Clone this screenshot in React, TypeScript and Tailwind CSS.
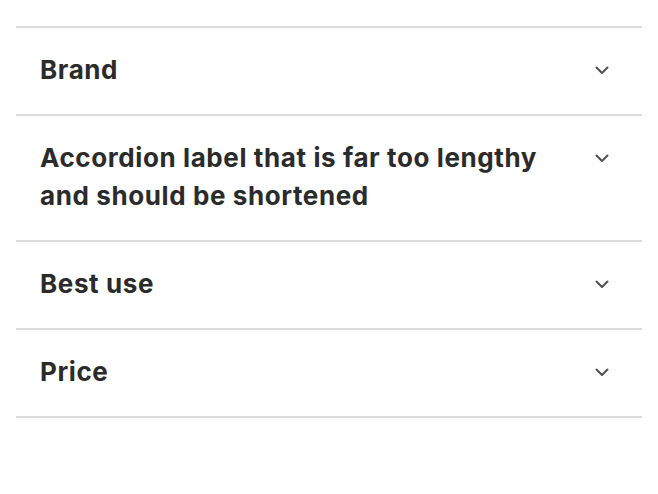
import { useState } from "react";

interface AccordionItem {
    id: string;
    label: string;
}

const items: AccordionItem[] = [
    { id: "brand", label: "Brand" },
    { id: "long", label: "Accordion label that is far too lengthy and should be shortened" },
    { id: "best-use", label: "Best use" },
    { id: "price", label: "Price" },
];

const Chevron = () => (
    <svg width="16" height="16" viewBox="0 0 16 16" fill="none" className="shrink-0">
        <path d="M2.5 5.5 8 11l5.5-5.5" stroke="#505050" strokeWidth="2" strokeLinecap="round" strokeLinejoin="round" />
    </svg>
);

const App = () => {
    const [open, setOpen] = useState<string | null>(null);

    return (
        <div className="bg-white min-h-[494px] px-4 pt-[26px] font-['Inter','Liberation_Sans',sans-serif]">
            <div className="border-b-2 border-[#dcdcdc]">
                {items.map((item) => (
                    <div key={item.id} className="border-t-2 border-[#dcdcdc]">
                        <button
                            type="button"
                            onClick={() => setOpen(open === item.id ? null : item.id)}
                            className="w-full flex items-start justify-between gap-6 pl-6 pr-[32px] pt-[23px] pb-[25px] text-left"
                        >
                            <span className="text-[26px] leading-[38px] font-bold tracking-[0.6px] text-[#2b2b2b] max-w-[520px]">
                                {item.label}
                            </span>
                            <span className="h-[38px] flex items-center">
                                <Chevron />
                            </span>
                        </button>
                    </div>
                ))}
            </div>
        </div>
    );
};

export default App;
